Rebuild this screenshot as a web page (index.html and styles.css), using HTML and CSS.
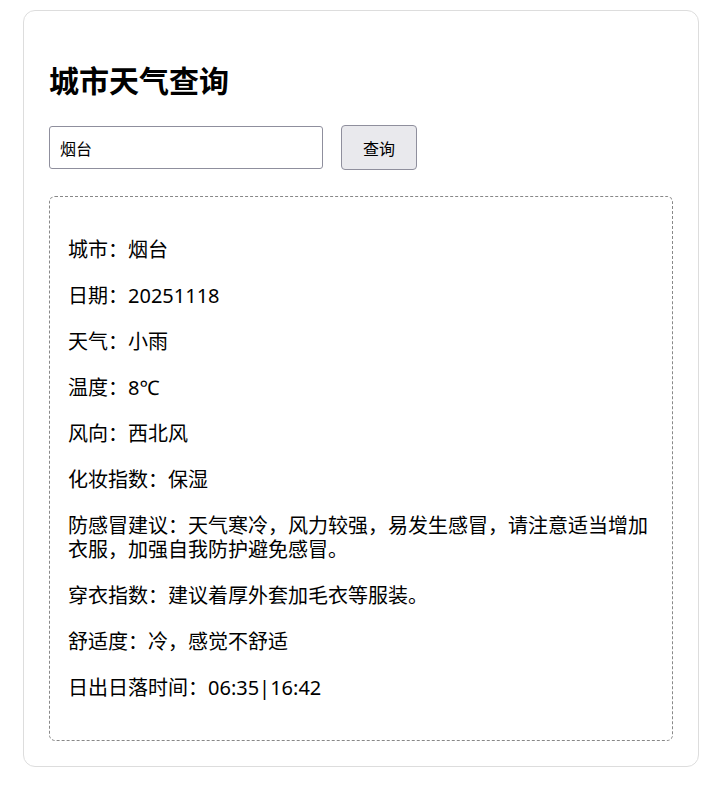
FILE: index.html
```html
<!DOCTYPE html>
<html>
  <head>
    <meta charset="utf-8">
    <meta name="viewport" content="width=device-width, initial-scale=1.0">
    <title>城市天气查询</title>
    <link rel="stylesheet" href="styles.css">
  </head>
  <body>
    <div class="card">
      <h1>城市天气查询</h1>
      <div class="search">
        <input class="city" type="text" value="烟台">
        <button class="query">查询</button>
      </div>
      <div class="result">
        <p>城市：烟台</p>
        <p>日期：20251118</p>
        <p>天气：小雨</p>
        <p>温度：8℃</p>
        <p>风向：西北风</p>
        <p>化妆指数：保湿</p>
        <p>防感冒建议：天气寒冷，风力较强，易发生感冒，请注意适当增加衣服，加强自我防护避免感冒。</p>
        <p>穿衣指数：建议着厚外套加毛衣等服装。</p>
        <p>舒适度：冷，感觉不舒适</p>
        <p>日出日落时间：06:35|16:42</p>
      </div>
    </div>
  </body>
</html>
```

FILE: styles.css
```css
* {
  box-sizing: border-box;
}

body {
  margin: 0;
  padding: 10px 0 0 23px;
  font-family: "Noto Sans", "Noto Sans CJK SC", sans-serif;
  color: #000;
  background-color: #fff;
}

.card {
  width: 676px;
  padding: 25px;
  border: 1px solid #ddd;
  border-radius: 12px;
}

h1 {
  margin: 23px 0 22px;
  font-size: 30px;
  line-height: 44px;
  font-weight: bold;
}

.search {
  display: flex;
  align-items: center;
  gap: 18px;
}

.city {
  width: 274px;
  height: 43px;
  padding: 0 10px;
  border: 1px solid #8f8f9d;
  border-radius: 3px;
  font-family: inherit;
  font-size: 16px;
  color: #000;
}

.query {
  width: 76px;
  height: 45px;
  border: 1px solid #8f8f9d;
  border-radius: 4px;
  background-color: #e9e9ed;
  font-family: inherit;
  font-size: 16px;
  color: #000;
}

.result {
  margin-top: 26px;
  padding: 19px 18px 18px;
  border: 1px dashed #888;
  border-radius: 6px;
}

.result p {
  margin: 22px 0;
  font-size: 20px;
  line-height: 24px;
}
```
